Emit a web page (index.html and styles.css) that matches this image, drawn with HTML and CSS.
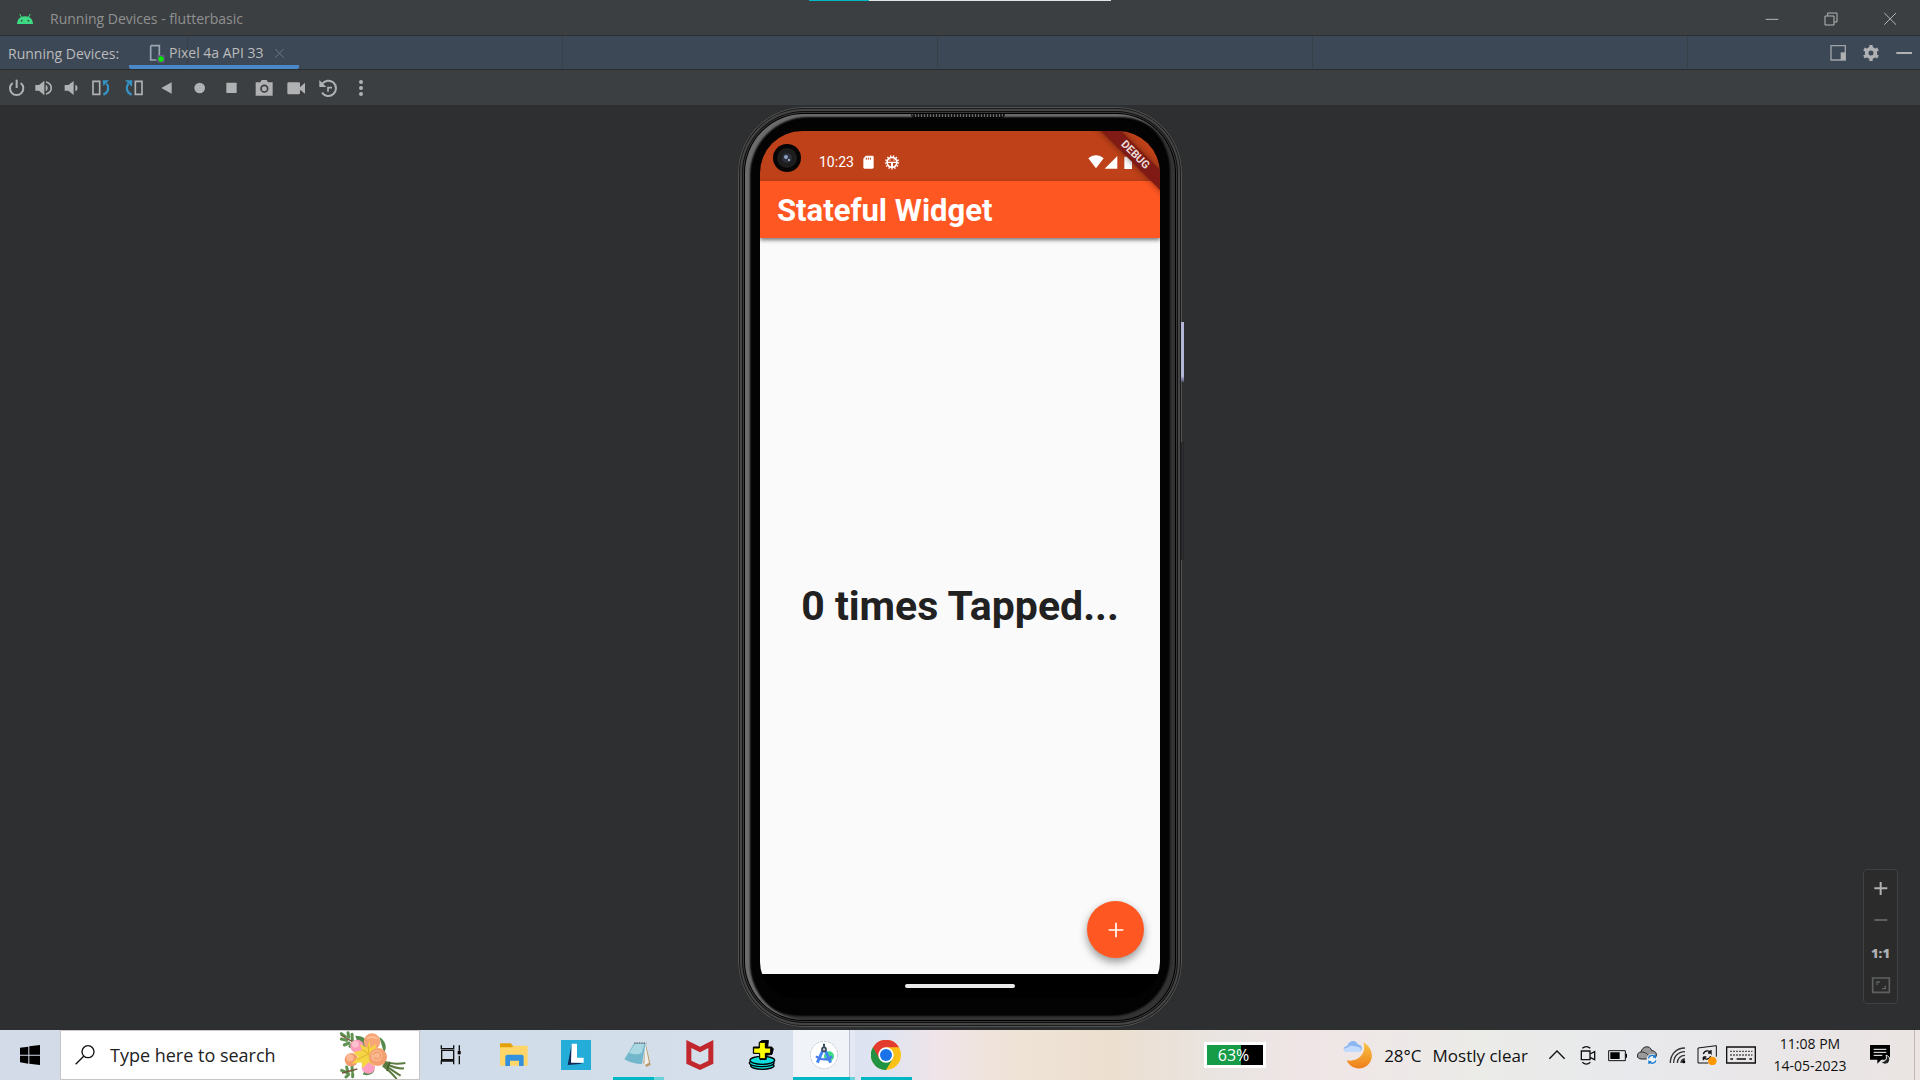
FILE: index.html
```html
<!DOCTYPE html>
<html lang="en">
<head>
<meta charset="utf-8">
<title>Running Devices - flutterbasic</title>
<link rel="stylesheet" href="styles.css">
</head>
<body>
<div class="share-line"></div>
<header class="titlebar">
  <svg class="i20" viewBox="0 0 60 60"><path d="M6 45C7 32 14 22 30 22s23 10 24 23z" fill="#3ddc84"/><path d="M14 15l6 10M46 15l-6 10" stroke="#3ddc84" stroke-width="3"/><circle cx="20" cy="35" r="2.500" fill="#3c3f41"/><circle cx="40" cy="35" r="2.500" fill="#3c3f41"/></svg>
  <h1 class="window-title">Running Devices - flutterbasic</h1>
  <nav class="window-controls">
    <button aria-label="Minimize"><svg class="i20" viewBox="0 0 60 60"><path d="M11 31h38" stroke="#b5b6b7" stroke-width="3"/></svg></button>
    <button aria-label="Restore"><svg class="i20" viewBox="0 0 60 60"><path d="M12 21h27v27H12zM20 20v-8h28v27h-8" fill="none" stroke="#b5b6b7" stroke-width="3"/></svg></button>
    <button aria-label="Close"><svg class="i20" viewBox="0 0 60 60"><path d="M13 12l35 35M48 12L13 47" stroke="#b5b6b7" stroke-width="3"/></svg></button>
  </nav>
</header>
<div class="tabbar">
  <span class="tab-label">Running Devices:</span>
  <div class="tab">
    <svg class="i20" viewBox="0 0 60 60"><path d="M14 8h26v31M31 51H14V8" fill="none" stroke="#9aa7b0" stroke-width="5"/><path d="M36 38h18v19H36z" fill="none" stroke="#77589a" stroke-width="3"/><circle cx="45" cy="48" r="8" fill="#0be80b"/></svg>
    <span class="tab-name">Pixel 4a API 33</span>
    <button aria-label="Close tab"><svg class="i14" viewBox="0 0 42 42"><path d="M7 9l25 26M32 9L7 35" stroke="#6d7882" stroke-width="3"/></svg></button>
  </div>
  <div class="tab-tools">
    <button aria-label="Window mode"><svg class="i20" viewBox="0 0 60 60"><path d="M9 8h43v43H9z" fill="none" stroke="#9fa4a9" stroke-width="4"/><path d="M38 28h14v23H38z" fill="#afb1b3"/></svg></button>
    <button aria-label="Settings"><svg class="i20" viewBox="0 0 60 60"><circle cx="30" cy="30" r="13" fill="none" stroke="#afb1b3" stroke-width="11"/><path d="M30 6v10M30 44v10M9 18l9 5M42 37l9 5M9 42l9-5M42 23l9-5" stroke="#afb1b3" stroke-width="10"/></svg></button>
    <button aria-label="Hide"><svg class="i20" viewBox="0 0 60 60"><path d="M7 30h47" stroke="#afb1b3" stroke-width="6"/></svg></button>
  </div>
</div>
<div class="toolbar">
  <button class="narrow" aria-label="Power"><svg class="i20" viewBox="0 0 60 60"><path d="M17 15a20 20 0 1 0 24 0" fill="none" stroke="#afb1b3" stroke-width="6"/><path d="M29 5v25" stroke="#afb1b3" stroke-width="6"/></svg></button>
  <button class="narrow" aria-label="Volume up"><svg class="i20" viewBox="0 0 60 60"><path d="M4 21h11L31 8v44L15 38H4z" fill="#afb1b3"/><path d="M35 20c8 4 8 16 0 20z" fill="#afb1b3"/><path d="M36 12c21 6 21 30 0 36" fill="none" stroke="#afb1b3" stroke-width="5"/></svg></button>
  <button class="narrow" aria-label="Volume down"><svg class="i20" viewBox="0 0 60 60"><path d="M11 21h11L38 9v42L22 38H11z" fill="#afb1b3"/><path d="M43 20c9 4 9 16 0 20z" fill="#afb1b3"/></svg></button>
  <button aria-label="Rotate left"><svg class="i20" viewBox="0 0 60 60"><path d="M6 10h20v39H6z" fill="none" stroke="#afb1b3" stroke-width="5"/><path d="M37 50c16-6 18-22 10-33" fill="none" stroke="#3592c4" stroke-width="7"/><path d="M35 7h19L37 24z" fill="#3592c4"/></svg></button>
  <button aria-label="Rotate right"><svg class="i20" viewBox="0 0 60 60"><path d="M34 10h20v39H34z" fill="none" stroke="#afb1b3" stroke-width="5"/><path d="M23 50C7 44 5 28 13 17" fill="none" stroke="#3592c4" stroke-width="7"/><path d="M25 7H3l21 19z" fill="#3592c4"/></svg></button>
  <button aria-label="Back"><svg class="i20" viewBox="0 0 60 60"><path d="M13 30l31-17v34z" fill="#afb1b3"/></svg></button>
  <button aria-label="Home"><svg class="i20" viewBox="0 0 60 60"><circle cx="29" cy="30" r="16" fill="#afb1b3"/></svg></button>
  <button class="mid" aria-label="Overview"><svg class="i20" viewBox="0 0 60 60"><rect x="13" y="14" width="31" height="31" rx="2" fill="#afb1b3"/></svg></button>
  <button class="mid" aria-label="Screenshot"><svg class="i20" viewBox="0 0 60 60"><path d="M5 13h14l4-7h15l4 7h14v40H5z" fill="#afb1b3"/><circle cx="31" cy="32" r="10" fill="none" stroke="#3c3f41" stroke-width="5"/></svg></button>
  <button class="mid" aria-label="Record"><svg class="i20" viewBox="0 0 60 60"><rect x="4" y="13" width="38" height="36" rx="4" fill="#afb1b3"/><path d="M40 29l17-15v33L40 34z" fill="#afb1b3"/></svg></button>
  <button class="mid" aria-label="Snapshots"><svg class="i20" viewBox="0 0 60 60"><path d="M12 18a23 23 0 1 1 0 26" fill="none" stroke="#afb1b3" stroke-width="6"/><path d="M4 6v21h21z" fill="#afb1b3"/><path d="M30 41V29h12" fill="none" stroke="#afb1b3" stroke-width="5"/></svg></button>
  <button class="mid" aria-label="More"><svg class="i20" viewBox="0 0 60 60"><g fill="#afb1b3"><circle cx="33" cy="12" r="6"/><circle cx="33" cy="30" r="6"/><circle cx="33" cy="48" r="6"/></g></svg></button>
</div>
<main class="emulator">
  <div class="phone">
    <div class="speaker"></div>
    <div class="power-key"></div>
    <div class="volume-key"></div>
    <div class="bezel">
      <div class="screen">
        <div class="statusbar">
          <svg class="camera" viewBox="0 0 28 28"><circle cx="14" cy="14" r="14" fill="#050505"/><circle cx="14" cy="14" r="10" fill="#1d1d1e"/><circle cx="14" cy="14" r="5" fill="#2b303a"/><circle cx="13" cy="13" r="2" fill="#8ea1c4"/><circle cx="16" cy="16" r="1" fill="#c3d2ee"/></svg>
          <span class="time">10:23</span>
          <svg class="i20" viewBox="0 0 60 60"><path d="M23 11h20a4 4 0 0 1 4 4v31a4 4 0 0 1-4 4H20a4 4 0 0 1-4-4V20z" fill="#fff"/><path d="M25 17v6M31 17v6M37 17v6" stroke="#bf4119" stroke-width="3"/></svg>
          <svg class="i20" viewBox="0 0 60 60"><circle cx="30" cy="31" r="15" fill="none" stroke="#fff" stroke-width="5"/><circle cx="30" cy="31" r="19" fill="none" stroke="#fff" stroke-width="5" stroke-dasharray="4 5"/><path d="M15 29h30v4H33v13h-6V33H15z" fill="#fff"/><path d="M24 22v4M36 22v4" stroke="#fff" stroke-width="3"/></svg>
          <span class="grow"></span>
          <svg class="i16" viewBox="0 0 48 48"><path d="M1 13c13-12 33-12 46 0L24 43z" fill="#fff"/></svg>
          <svg class="i16" viewBox="0 0 48 48"><path d="M43 6v38H5z" fill="#fff"/></svg>
          <svg class="i16 batt" viewBox="0 0 48 48"><path d="M13 8h7V3h9v5h7v37H13z" fill="#fff"/></svg>
        </div>
        <div class="appbar"><h2 class="app-title">Stateful Widget</h2></div>
        <div class="app-body">
          <p class="counter">0 times Tapped...</p>
          <button class="fab" aria-label="Increment"><svg class="i20" viewBox="0 0 60 60"><path d="M8 30h44M30 8v44" stroke="#fff" stroke-width="5"/></svg></button>
        </div>
        <div class="navbar"><span class="nav-handle"></span></div>
        <div class="ribbon">DEBUG</div>
      </div>
    </div>
  </div>
  <div class="zoom-panel">
    <button aria-label="Zoom in"><svg class="i20" viewBox="0 0 60 60"><path d="M10 31h39M29 12v39" stroke="#afb1b3" stroke-width="6"/></svg></button>
    <button aria-label="Zoom out"><svg class="i20" viewBox="0 0 60 60"><path d="M10 30h39" stroke="#5e6061" stroke-width="6"/></svg></button>
    <button class="ratio">1:1</button>
    <button aria-label="Fit to screen"><svg class="i20" viewBox="0 0 60 60"><path d="M5 9h50v43H5z" fill="none" stroke="#5e6061" stroke-width="5"/><path d="M18 30v-9h9M33 41h10v-9" fill="none" stroke="#5e6061" stroke-width="4"/></svg></button>
  </div>
</main>
<footer class="taskbar">
  <button class="start" aria-label="Start"><svg class="i20" viewBox="0 0 60 60"><path d="M0 8l25-3v24H0zM28 4l32-4v29H28zM0 32h25v24L0 52zM28 32h32v28l-32-4z"/></svg></button>
  <label class="search">
    <svg class="i20" viewBox="0 0 60 60"><circle cx="39" cy="20" r="18" fill="none" stroke="#111" stroke-width="4"/><path d="M26 34L2 58" stroke="#111" stroke-width="4"/></svg>
    <input type="text" aria-label="Search" placeholder="Type here to search">
    <svg class="bouquet" viewBox="0 0 204 144">
      <g fill="none" stroke="#5f9150" stroke-width="9" stroke-linecap="round"><path d="M10 8l12 9M30 5l2 14M10 24l16 4M19 42l14-6M42 10l1 18M36 46l9-8M11 118l14 6M26 108l4 16M42 106l1 16M24 138l8-8M44 137v-9" /></g>
      <path d="M8 12l46 26M12 126l46-12" stroke="#79593f" stroke-width="4"/>
      <path d="M52 14c26 0 40 14 42 36-22-2-38-14-42-36zM124 18c20 12 24 32 14 48zM74 130c6-14 22-20 36-12-8 14-20 18-36 12z" fill="#568a4c"/>
      <g fill="none" stroke="#5b7b41" stroke-width="6"><path d="M138 92c24 8 42 8 64 4M138 96c24 12 40 18 60 16M136 100c24 14 36 26 52 34M134 104c20 14 30 26 42 40"/></g>
      <path d="M155 92l-8 28" stroke="#42632d" stroke-width="5"/>
      <circle cx="57" cy="46" r="20" fill="#fb9db8"/><circle cx="52" cy="40" r="10" fill="#ffc1d0"/>
      <circle cx="91" cy="108" r="20" fill="#fd9dc2"/>
      <circle cx="40" cy="86" r="20" fill="#f39a6c"/><circle cx="36" cy="80" r="11" fill="#fbb994"/>
      <circle cx="102" cy="32" r="25" fill="#f7a678"/><path d="M84 24c12-14 30-10 36 2-12-6-24-6-36-2z" fill="#ffc09a"/>
      <path d="M94 28l4 24 14-14 2 18 18-4-12 18 12 12-20 4-4 18-16-10-18 18-4-18-28 4 18-20-14-14 26-6-6-18 22 10z" fill="#f6d545"/>
      <path d="M92 44v24L72 56M92 68L58 86M92 68l6 28" stroke="#deb12c" stroke-width="3" fill="none"/>
      <circle cx="120" cy="78" r="27" fill="#f4a071"/><circle cx="116" cy="74" r="17" fill="#fbb88e"/><path d="M104 72c6-12 22-10 24 0 2 10-14 16-20 8" fill="none" stroke="#ee8d5b" stroke-width="3"/>
    </svg>
  </label>
  <nav class="apps">
    <button aria-label="Task view"><svg class="i30" viewBox="0 0 90 90"><path d="M13 16v10h37V16M13 73V63h37v10M14 31h36v28H14zM67 16v17M67 47v26" fill="none" stroke="#111" stroke-width="4"/><path d="M62 33h9v10h-9z"/></svg></button>
    <button aria-label="File Explorer"><svg class="i30" viewBox="0 0 90 90"><path d="M3 10h32l7 8h40v56H3z" fill="#e3a008"/><path d="M3 22h36l5-5h42v60H3z" fill="#ffd667"/><path d="M19 78V50q0-6 6-6h43q6 0 6 6v28H60V62H33v16z" fill="#3390df"/></svg></button>
    <button aria-label="L app"><svg class="i30" viewBox="0 0 90 90"><path d="M0 0h90v90H0z" fill="#25add9"/><path d="M32 12L20 75l46-4-34-6z" fill="#102958"/><path d="M32 11h16v42h20v15H30z" fill="#fff"/></svg></button>
    <button class="running stack" aria-label="Notepad"><svg class="i30" viewBox="0 0 90 90"><path d="M68 10l15 64-12 7-10-12z" fill="#b89b6a"/><path d="M66 10l12 58-14 8z" fill="#edf0ee"/><path d="M34 9h34L57 72c-18 0-36-4-53-14z" fill="#72b7cb"/><path d="M36 12h28l-8 26C42 46 28 42 18 38z" fill="#a9d8e2"/><path d="M34 9h36" stroke="#777" stroke-width="5" stroke-dasharray="4 3"/></svg></button>
    <button aria-label="McAfee"><svg class="i30" viewBox="0 0 90 90"><path d="M4 0l41 20L85 0v71L45 90 4 71zM19 24v38l26 12 25-12V24L45 37z" fill="#c1272d" fill-rule="evenodd"/></svg></button>
    <button aria-label="Disk tool"><svg class="i30" viewBox="0 0 90 90"><g fill="#10dede" stroke="#000" stroke-width="4"><ellipse cx="46" cy="77" rx="35" ry="11"/><ellipse cx="44" cy="69" rx="37" ry="11"/><ellipse cx="46" cy="61" rx="37" ry="12"/></g><path d="M37 7l9-6h18l-2 20h12l5 5-4 17-17 3v12l-19 1V40H19V21h18z" stroke="#000" stroke-width="3"/><path d="M37 7h18v17h16v16H55v16H38V40H20V24h17z" fill="#ff0" stroke="#000" stroke-width="3"/></svg></button>
    <button class="running stack active" aria-label="Android Studio"><svg class="i30" viewBox="0 0 90 90"><circle cx="45" cy="45" r="41" fill="#fff" stroke="#c7ced6" stroke-width="3" stroke-dasharray="9 3"/><circle cx="60" cy="49" r="15" fill="#3ddc84"/><path d="M42 30L25 68M48 30l17 38" stroke="#4285f4" stroke-width="9"/><path d="M21 49c15 12 36 12 48 0" fill="none" stroke="#4d7dea" stroke-width="7"/><path d="M45 11v11" stroke="#3d4c5a" stroke-width="6"/><circle cx="45" cy="28" r="6" fill="#cdd8e2" stroke="#3d4c5a" stroke-width="5"/></svg></button>
    <button class="running" aria-label="Chrome"><svg class="i30" viewBox="0 0 90 90"><circle cx="45" cy="45" r="45" fill="#fbc116"/><path d="M6 22A45 45 0 0 0 45 90L65 56 45 45z" fill="#229342"/><path d="M6 22A45 45 0 0 1 84 22H45L25 56z" fill="#e33b2e"/><circle cx="45" cy="45" r="23" fill="#fff"/><circle cx="45" cy="45" r="18" fill="#1a73e8"/></svg></button>
  </nav>
  <div class="battery-meter">63%</div>
  <button class="weather"><svg class="i30" viewBox="0 0 90 90"><defs><linearGradient id="moon" x2="0" y2="1"><stop stop-color="#f9c545"/><stop offset="1" stop-color="#ee7e1b"/></linearGradient></defs><path d="M61 7c34 18 34 64 0 76-20 7-42-2-50-22 32 6 62-18 50-54z" fill="url(#moon)"/><path d="M13 36C-3 34 0 18 13 18 18-2 42-1 44 13c16 1 16 20 4 23z" fill="#8bb6f2"/><path d="M13 36C-3 34 1 22 13 23c12-12 26-2 30-3 12 0 14 13 5 16z" fill="#c2dafc"/></svg><span>28°C</span><span>Mostly clear</span></button>
  <div class="tray">
    <button aria-label="Show hidden icons"><svg class="i20" viewBox="0 0 60 60"><path d="M7 41l23-23 23 23" fill="none" stroke="#111" stroke-width="4"/></svg></button>
    <button aria-label="Meet now"><svg class="i20" viewBox="0 0 60 60"><path d="M13 18h26v26H13zM39 27l14-7v24l-14-7M16 10c8-7 16-7 24 0M16 52c8 7 16 7 24 0" fill="none" stroke="#111" stroke-width="4"/></svg></button>
    <button aria-label="Battery"><svg class="i20" viewBox="0 0 60 60"><path d="M5 17h50v30H5z" fill="none" stroke="#111" stroke-width="3"/><path d="M10 22h28v20H10zM56 26h4v12h-4z" fill="#000"/></svg></button>
    <button aria-label="OneDrive"><svg class="i20" viewBox="0 0 60 60"><path d="M14 42C-4 42-2 22 12 21 16 2 40 0 44 17c18 0 20 25 5 25z" fill="#9a9a9a" stroke="#222" stroke-width="3"/><path d="M12 21c14-1 22 8 30 20" stroke="#333" stroke-width="3" fill="none"/><circle cx="45" cy="43" r="16" fill="#eef4f8"/><path d="M34 40a12 12 0 0 1 21-4v-7M55 36h-7M57 46a12 12 0 0 1-21 4v7M36 50h7" fill="none" stroke="#1b78c8" stroke-width="4"/></svg></button>
    <button aria-label="Network"><svg class="i20" viewBox="0 0 60 60"><path d="M10 54C10 28 28 9 54 9M20 54c0-20 14-34 34-34M31 54c0-14 10-23 23-23M42 54c0-7 5-12 12-12" fill="none" stroke="#333" stroke-width="4"/><circle cx="50" cy="50" r="5"/></svg></button>
    <button aria-label="Windows Update"><svg class="i20" viewBox="0 0 60 60"><path d="M34 54H3V9l55-7v33" fill="none" stroke="#111" stroke-width="3"/><path d="M19 27c4-12 18-12 23-3v-9M42 24h-9M41 34c-4 10-18 12-22 2v10M19 36h9" fill="none" stroke="#111" stroke-width="4"/><circle cx="46" cy="48" r="13" fill="#ff9800"/></svg></button>
    <button class="wide" aria-label="Touch keyboard"><svg class="i30" viewBox="0 0 90 90"><path d="M2 21h86v48H2z" fill="none" stroke="#111" stroke-width="4"/><path d="M13 34h66M13 45h66" stroke="#111" stroke-width="4" stroke-dasharray="4 5"/><path d="M13 57h8M32 57h28M70 57h8" stroke="#111" stroke-width="4"/></svg></button>
  </div>
  <button class="clock"><span>11:08 PM</span><span>14-05-2023</span></button>
  <button class="notify" aria-label="Notifications"><svg class="i20" viewBox="0 0 60 60"><path d="M0 0h60v44H34L22 56V44H0z"/><path d="M11 13h38M11 22h38M11 31h26" stroke="#fff" stroke-width="3"/><path d="M48 31c5 12-4 20-15 18 5 13 26 11 26-6 0-6-4-11-11-12z" fill="#222" stroke="#eee" stroke-width="3"/></svg></button>
  <button class="show-desktop" aria-label="Show desktop"></button>
</footer>
</body>
</html>
```
FILE: styles.css
```css
* { box-sizing: border-box; }
body {
  margin: 0;
  min-height: 100vh;
  display: flex;
  flex-direction: column;
  background: #2e2f31;
  color: #bbbbbb;
  font-family: "Open Sans", "Noto Sans", sans-serif;
  font-size: 14px;
}
button {
  margin: 0; padding: 0; border: 0; background: none;
  color: inherit; font: inherit;
  display: flex; align-items: center; justify-content: center;
}
svg { display: block; flex: none; }
h1, h2, p { margin: 0; font-weight: 400; }
.i14 { width: 14px; height: 14px; }
.i16 { width: 16px; height: 16px; }
.i20 { width: 20px; height: 20px; }
.i30 { width: 30px; height: 30px; }

.share-line {
  position: absolute; top: 0; left: 50%;
  width: 302px; height: 1px; margin-left: -151px;
  background: linear-gradient(90deg, #00b7c3 60px, #e4e4e4 60px);
}
.titlebar {
  display: flex; align-items: center;
  height: 36px; padding: 2px 1px 0 15px;
  background: #3c3f41; border-bottom: 1px solid #2c2f31;
}
.window-title { margin-left: 15px; font-size: 14px; line-height: 20px; color: #8f9192; }
.window-controls { display: flex; margin-left: auto; }
.window-controls button { width: 59px; height: 33px; }

.tabbar {
  display: flex; align-items: center;
  height: 34px; padding-left: 8px;
  background: linear-gradient(90deg, #394047 1px, #3d4856 1px) 187px 0 / 375px 100%;
  border-bottom: 1px solid #2c2f31;
}
.tab-label { width: 121px; padding-top: 2px; line-height: 20px; }
.tab {
  display: flex; align-items: center; gap: 3px;
  width: 170px; height: 33px; padding-left: 17px; padding-top: 4px;
  border-bottom: 4px solid #4a88c7; border-radius: 2px;
}
.tab-name { line-height: 20px; width: 101px; white-space: nowrap; }
.tab-tools { display: flex; margin-left: auto; }
.tab-tools button { width: 33px; height: 33px; }

.toolbar {
  display: flex; align-items: center;
  height: 35px; padding-left: 3px; background: #3c3f41;
}
.toolbar button { width: 33px; height: 35px; }
.toolbar .narrow { width: 27px; }
.toolbar .mid { width: 32px; }

.emulator {
  flex: 1; position: relative;
  display: flex; justify-content: center;
  padding: 2px 0 3px 0; min-height: 600px;
}
.phone {
  position: relative; display: flex;
  width: 444px; padding: 7px;
  border-radius: 66px; background: #262626;
  box-shadow: inset 0 0 0 1px #505151, inset 0 0 0 2px #1c1c1c, inset 0 0 0 4px #454545, inset 0 0 0 5px #101010, inset 0 0 0 6px #383838, inset 0 0 0 7px #000;
}
.bezel {
  flex: 1; display: flex;
  padding: 17px 15px 22px 15px;
  border-radius: 59px; background: #030303;
  box-shadow: inset 4px 2px 2px 1px #6c6c6c, inset -4px -3px 2px 1px #333;
}
.speaker {
  position: absolute; top: 6px; left: 50%;
  width: 94px; height: 5px; margin-left: -49px;
  border: 1px solid #000; border-radius: 0 0 4px 4px;
  background: repeating-linear-gradient(90deg, #6a6a6a 0 1px, #1d1d1d 1px 3px);
}
.power-key, .volume-key { position: absolute; right: -2px; width: 3px; }
.power-key { top: 215px; height: 60px; background: linear-gradient(#b4b6d8 90%, #50536e); }
.volume-key { top: 335px; height: 118px; border: 1px solid #252525; background: #303138; }
.screen {
  flex: 1; position: relative; overflow: hidden;
  display: flex; flex-direction: column;
  border-radius: 42px 42px 36px 36px; background: #000;
  color: #fff; font-family: Roboto, sans-serif;
}
.statusbar {
  display: flex; align-items: center; gap: 4px;
  height: 50px; padding: 12px 24px 0 13px; background: #bf4119;
}
.camera { width: 28px; height: 28px; margin: -8px 14px 0 0; }
.time { font-size: 14px; line-height: 20px; }
.grow { flex: 1; }
.statusbar .i16 { margin-right: -5px; }
.statusbar .batt { margin-right: 0; margin-left: 2px; }
.appbar {
  position: relative; z-index: 1;
  display: flex; align-items: center;
  height: 57px; padding: 2px 0 0 17px;
  background: #ff5722; box-shadow: 0 2px 4px #0008;
}
.app-title { font-size: 31px; line-height: 40px; font-weight: 700; }
.app-body { flex: 1; position: relative; display: flex; align-items: center; justify-content: center; background: #fafafa; }
.counter { font-size: 41px; line-height: 48px; font-weight: 700; color: #212121; white-space: nowrap; }
.fab {
  position: absolute; right: 16px; bottom: 16px;
  width: 57px; height: 57px; border-radius: 50%;
  background: #ff5722; box-shadow: 0 4px 8px #0006;
}
.navbar { display: flex; align-items: center; justify-content: center; height: 24px; background: #000; }
.nav-handle { width: 110px; height: 4px; border-radius: 2px; background: #ebebeb; }
.ribbon {
  position: absolute; z-index: 2; top: 17px; right: -32px;
  width: 114px; height: 14px;
  transform: rotate(45deg);
  background: #7f1b14; box-shadow: 0 0 6px #0007;
  color: #eadad8; font-size: 11px; line-height: 14px; font-weight: 700; text-align: center;
}
.zoom-panel {
  position: absolute; right: 22px; bottom: 26px;
  display: flex; flex-direction: column; align-items: center; justify-content: space-around;
  width: 35px; height: 135px; padding: 2px 0;
  background: #2b2b2b; border: 1px solid #3f4142; border-radius: 4px;
}
.zoom-panel button { width: 33px; height: 32px; }
.zoom-panel .ratio { font-size: 13px; font-weight: 800; color: #afb1b3; }

.taskbar {
  display: flex; align-items: stretch;
  height: 50px; color: #111;
  background: linear-gradient(90deg, #d3dbe8 0, #d0dce9 25%, #d6e0ec 41%, #dfe4f2 46%, #f0e4e8 49%, #efe3d6 53%, #ecdfd0 58%, #e9e5e3 64%, #f0e5e6 68%, #ebebe8 77%, #e8e9ec 85%, #ebe4e3 100%);
}
.start { width: 60px; }
.search {
  display: flex; align-items: center;
  width: 360px; padding: 0 13px 0 14px;
  background: #fff; border: 1px solid #c9c4c5;
}
.search input {
  flex: 1; min-width: 0; margin-left: 15px; padding: 0;
  border: 0; outline: 0; background: none;
  font-family: inherit; font-size: 18px; color: #222;
}
.search input::placeholder { color: #222; opacity: 1; }
.bouquet { width: 68px; height: 48px; }
.apps { display: flex; padding-left: 1px; }
.apps button { width: 62px; }
.running { background: linear-gradient(#00b7c3, #00b7c3) center bottom / 51px 3px no-repeat; }
.stack { background: linear-gradient(90deg, #00b7c3 41px, #6cd2d9 41px) center bottom / 51px 3px no-repeat; }
.active { background: linear-gradient(90deg, #00b7c3 57px, #6cd2d9 57px) left bottom / 100% 3px no-repeat, linear-gradient(90deg, #f0f3f8 56px, #b8c2d4 56px 57px, #e3e8f2 57px); }
.battery-meter {
  align-self: center; margin: 0 0 0 auto;
  width: 62px; height: 26px; padding-right: 3px;
  border: 3px solid #fff;
  background: linear-gradient(90deg, #169b47 60%, #000 60%);
  color: #fff; font-size: 16px; line-height: 20px; text-align: center;
}
.weather { gap: 11px; margin-left: 76px; width: 187px; font-size: 17px; white-space: nowrap; }
.tray { display: flex; margin-left: 13px; }
.tray button { width: 30px; }
.tray .wide { width: 38px; }
.clock {
  flex-direction: column; width: 100px;
  font-size: 14px; line-height: 22px;
}
.notify { width: 40px; margin-right: 14px; }
.show-desktop { width: 6px; border-left: 1px solid #bdb9b9; }
```
